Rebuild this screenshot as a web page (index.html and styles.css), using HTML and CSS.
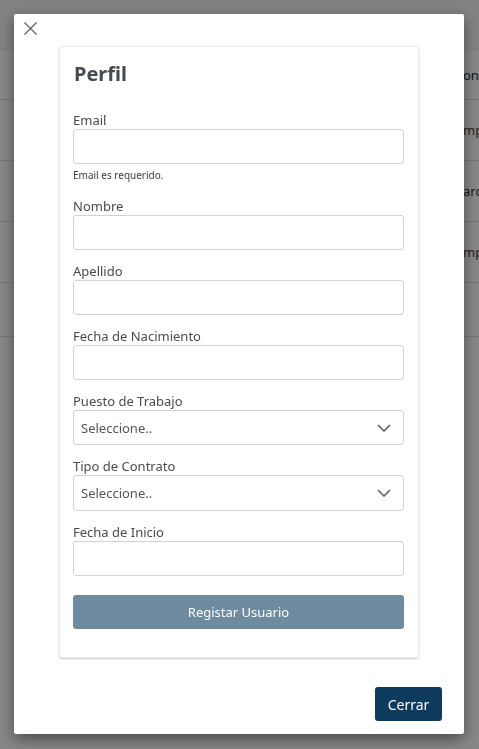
FILE: index.html
```html
<!DOCTYPE html>
<html lang="es">
<head>
<meta charset="utf-8">
<title>Perfil</title>
<link rel="stylesheet" href="styles.css">
</head>
<body>
<div class="page">
  <div class="toolbar"></div>
  <div class="row head"><span class="cell">on</span></div>
  <div class="row"><span class="cell brown">mp</span></div>
  <div class="row"><span class="cell">arc</span></div>
  <div class="row"><span class="cell brown">mp</span></div>
  <div class="row last"></div>
</div>

<div class="backdrop">
  <div class="modal">
    <div class="modal-header">
      <button class="close" aria-label="Cerrar">
        <svg width="13" height="13" viewBox="0 0 13 13"><path d="M0.5 0.5L12.5 12.5M12.5 0.5L0.5 12.5" stroke="#5f6368" stroke-width="1.3" fill="none"/></svg>
      </button>
    </div>
    <div class="card">
      <h2 class="title">Perfil</h2>
      <div class="field">
        <label class="label">Email</label>
        <input class="input" type="text">
        <div class="error">Email es requerido.</div>
      </div>
      <div class="field">
        <label class="label">Nombre</label>
        <input class="input" type="text">
      </div>
      <div class="field">
        <label class="label">Apellido</label>
        <input class="input" type="text">
      </div>
      <div class="field">
        <label class="label">Fecha de Nacimiento</label>
        <input class="input" type="text">
      </div>
      <div class="field">
        <label class="label">Puesto de Trabajo</label>
        <div class="select"><span>Seleccione..</span>
          <svg width="14" height="8" viewBox="0 0 14 8"><path d="M1 1L7 7L13 1" stroke="#5a6068" stroke-width="1.6" fill="none"/></svg>
        </div>
      </div>
      <div class="field">
        <label class="label">Tipo de Contrato</label>
        <div class="select tall"><span>Seleccione..</span>
          <svg width="14" height="8" viewBox="0 0 14 8"><path d="M1 1L7 7L13 1" stroke="#5a6068" stroke-width="1.6" fill="none"/></svg>
        </div>
      </div>
      <div class="field">
        <label class="label">Fecha de Inicio</label>
        <input class="input" type="text">
      </div>
      <button class="submit">Registar Usuario</button>
    </div>
    <div class="modal-footer">
      <button class="btn-close">Cerrar</button>
    </div>
  </div>
</div>
</body>
</html>
```

FILE: styles.css
```css
* { box-sizing: border-box; }
html, body { margin: 0; padding: 0; }
body {
  font-family: "Noto Sans", "Open Sans", sans-serif;
  background: #ffffff;
  width: 479px;
  height: 749px;
  overflow: hidden;
}
.page { width: 479px; }
.toolbar { height: 50px; background: #f6f6f6; border-bottom: 1px solid #f0f0f0; }
.row {
  height: 61px;
  border-bottom: 1px solid #dedede;
  display: flex;
  align-items: center;
  padding-left: 463px;
  font-size: 13px;
  color: #333;
  white-space: nowrap;
}
.row.head { height: 50px; color: #2a2a2a; }
.row.last { height: 54px; }
.cell { display: block; }
.brown { color: #4a3a2a; }

.backdrop {
  position: fixed;
  inset: 0;
  background: rgba(0, 0, 0, 0.47);
  display: flex;
  align-items: flex-start;
  padding: 14px 0 0 14px;
}
.modal {
  width: 450px;
  height: 720px;
  background: #fff;
  border-radius: 2px;
  box-shadow: 0 5px 15px rgba(0, 0, 0, 0.45);
  display: flex;
  flex-direction: column;
}
.modal-header { height: 32px; position: relative; }
.close {
  border: 0;
  background: none;
  padding: 0;
  margin: 8px 0 0 10px;
  width: 13px;
  height: 13px;
  display: block;
  cursor: pointer;
}
.close svg { display: block; }
.card {
  margin-left: 45px;
  width: 360px;
  border: 1px solid #ececec;
  border-radius: 3px;
  box-shadow: 0 1px 2px rgba(0, 0, 0, 0.22);
  padding: 13px 14px 28px 13px;
}
.title {
  margin: 0 0 23px 1px;
  font-size: 20px;
  line-height: 28px;
  font-weight: 700;
  color: #454b52;
}
.field { margin-bottom: 12px; display: flex; flex-direction: column; }
.label {
  font-size: 13px;
  line-height: 18px;
  color: #4a4a4a;
}
.input {
  height: 35px;
  width: 331px;
  border: 1px solid #cfd2d6;
  border-radius: 3px;
  background: #fff;
  font: inherit;
  margin: 0;
}
.error {
  font-size: 10px;
  line-height: 14px;
  color: #3c3c3c;
  margin-top: 4px;
  margin-bottom: 3px;
}
.select {
  height: 35px;
  width: 331px;
  border: 1px solid #cfd2d6;
  border-radius: 3px;
  display: flex;
  align-items: center;
  justify-content: space-between;
  padding: 0 12px 0 7px;
  font-size: 13px;
  color: #555;
}
.select.tall { height: 36px; }
.select svg { display: block; }
.submit {
  margin-top: 7px;
  width: 331px;
  height: 34px;
  border: 0;
  border-radius: 3px;
  background: #6e8ba0;
  color: #fff;
  font-family: inherit;
  font-size: 13px;
}
.modal-footer {
  margin-top: auto;
  display: flex;
  justify-content: flex-end;
  padding: 0 22px 13px 0;
}
.btn-close {
  width: 67px;
  height: 34px;
  border: 0;
  border-radius: 3px;
  background: #0e3a5e;
  color: #fff;
  font-family: inherit;
  font-size: 14px;
}
```
